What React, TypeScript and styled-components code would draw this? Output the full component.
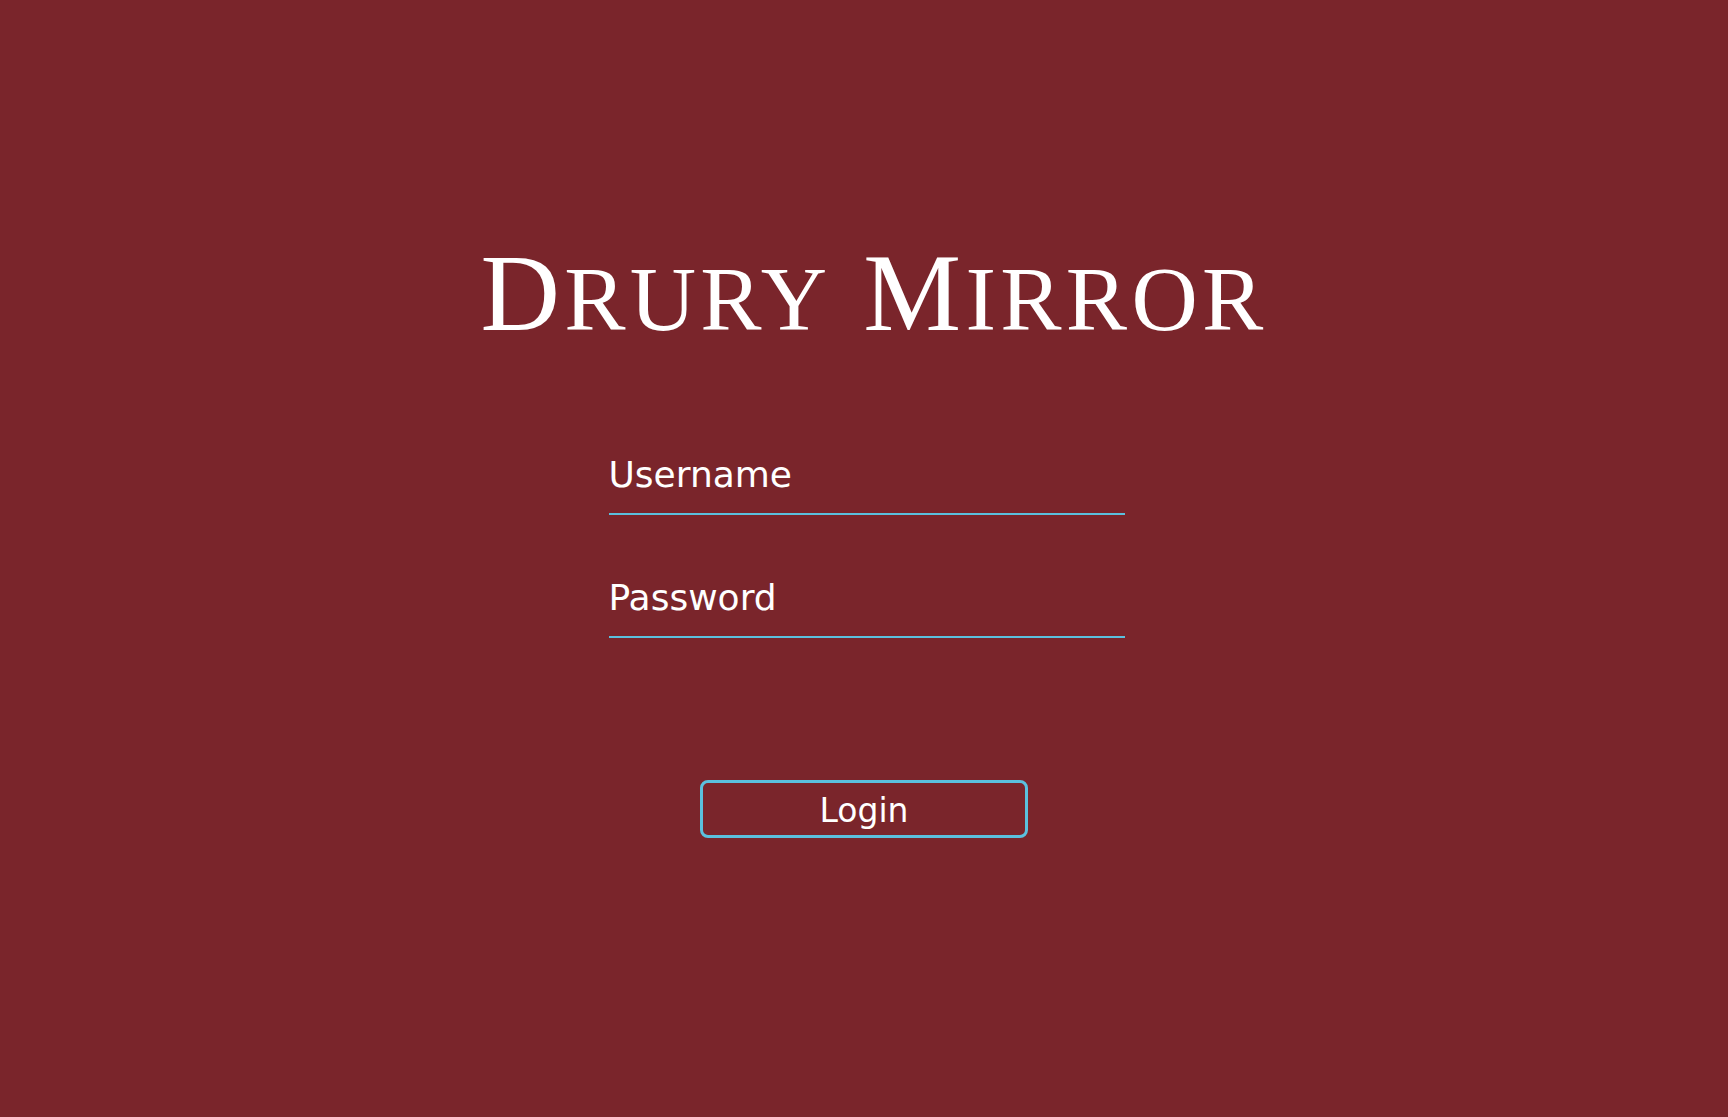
import React from "react";
import styled, { createGlobalStyle } from "styled-components";

const GlobalStyle = createGlobalStyle`
  html, body {
    margin: 0;
    padding: 0;
    background: #7a252b;
  }
  body {
    font-family: "DejaVu Sans", Verdana, sans-serif;
    color: #ffffff;
  }
  * { box-sizing: border-box; }
`;

const Page = styled.main`
  min-height: 1117px;
  background: #7a252b;
  display: flex;
  flex-direction: column;
  align-items: center;
  padding-top: 238px;
`;

const Title = styled.h1`
  margin: 0 0 99px 0;
  font-family: "Liberation Serif", "Times New Roman", serif;
  font-weight: 400;
  font-size: 110px;
  line-height: 110px;
  letter-spacing: 4.3px;
  color: #ffffff;
  white-space: nowrap;
  padding-left: 20px;
`;

const SmallCaps = styled.span`
  text-transform: uppercase;
  font-size: 0.835em;
`;

const Form = styled.form`
  display: flex;
  flex-direction: column;
  align-items: center;
  margin: 0;
`;

const Field = styled.input<{ $gap?: number }>`
  display: block;
  width: 516px;
  height: 62px;
  margin: 0 0 ${(p) => p.$gap ?? 0}px 5px;
  padding: 0 0 18px 0;
  border: none;
  border-bottom: 2px solid #5bc0de;
  background: transparent;
  color: #ffffff;
  font-family: "DejaVu Sans", Verdana, sans-serif;
  font-size: 36px;
  line-height: 42px;
  outline: none;
  &::placeholder {
    color: #ffffff;
    opacity: 1;
  }
`;

const LoginButton = styled.button`
  width: 328px;
  height: 58px;
  padding: 3px 0 0 0;
  border: 3px solid #5bc0de;
  border-radius: 8px;
  background: transparent;
  color: #ffffff;
  font-family: "DejaVu Sans", Verdana, sans-serif;
  font-size: 33px;
  line-height: 1;
  cursor: pointer;
`;

function Word({ first, rest }: { first: string; rest: string }) {
  return (
    <>
      {first}
      <SmallCaps>{rest}</SmallCaps>
    </>
  );
}

export default function App() {
  return (
    <>
      <GlobalStyle />
      <Page>
        <Title>
          <Word first="D" rest="rury" /> <Word first="M" rest="irror" />
        </Title>
        <Form onSubmit={(e) => e.preventDefault()}>
          <Field type="text" placeholder="Username" $gap={61} />
          <Field type="password" placeholder="Password" $gap={142} />
          <LoginButton type="submit">Login</LoginButton>
        </Form>
      </Page>
    </>
  );
}
